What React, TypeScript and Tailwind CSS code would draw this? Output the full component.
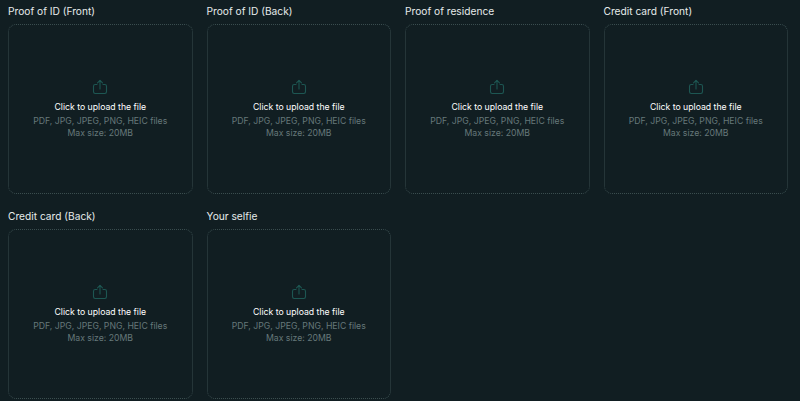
const documents = [
  "Proof of ID (Front)",
  "Proof of ID (Back)",
  "Proof of residence",
  "Credit card (Front)",
  "Credit card (Back)",
  "Your selfie",
];

function UploadIcon() {
  return (
    <svg
      width="16"
      height="16"
      viewBox="0 0 16 16"
      fill="none"
      stroke="#1d5652"
      strokeWidth="1.1"
      strokeLinecap="round"
      strokeLinejoin="round"
    >
      <path d="M5 5.5H3.2C2.3 5.5 1.5 6.3 1.5 7.2V12.8C1.5 13.7 2.3 14.5 3.2 14.5H12.8C13.7 14.5 14.5 13.7 14.5 12.8V7.2C14.5 6.3 13.7 5.5 12.8 5.5H11" />
      <path d="M8 10V1.5" />
      <path d="M5.5 3.8L8 1.3L10.5 3.8" />
    </svg>
  );
}

function UploadCard({ label }: { label: string }) {
  return (
    <div className="flex flex-col">
      <div className="h-[24px] flex items-center text-[10.2px] text-[#e6ebeb]">
        {label}
      </div>
      <div className="h-[170px] rounded-lg border border-dotted border-[#3a4d4f] flex flex-col items-center pt-[54px]">
        <UploadIcon />
        <div className="mt-[6px] text-[8.7px] leading-[12px] text-white">
          Click to upload the file
        </div>
        <div className="mt-[3px] text-[8.7px] leading-[11.5px] text-[#66787a] text-center">
          PDF, JPG, JPEG, PNG, HEIC files
          <br />
          Max size: 20MB
        </div>
      </div>
    </div>
  );
}

export default function App() {
  return (
    <div className="w-[800px] h-[401px] overflow-hidden bg-[#111e22] pl-[8px] pr-[12px] font-['Inter',sans-serif]">
      <div className="grid grid-cols-4 gap-x-[14px] gap-y-[11px]">
        {documents.map((label) => (
          <UploadCard key={label} label={label} />
        ))}
      </div>
    </div>
  );
}
